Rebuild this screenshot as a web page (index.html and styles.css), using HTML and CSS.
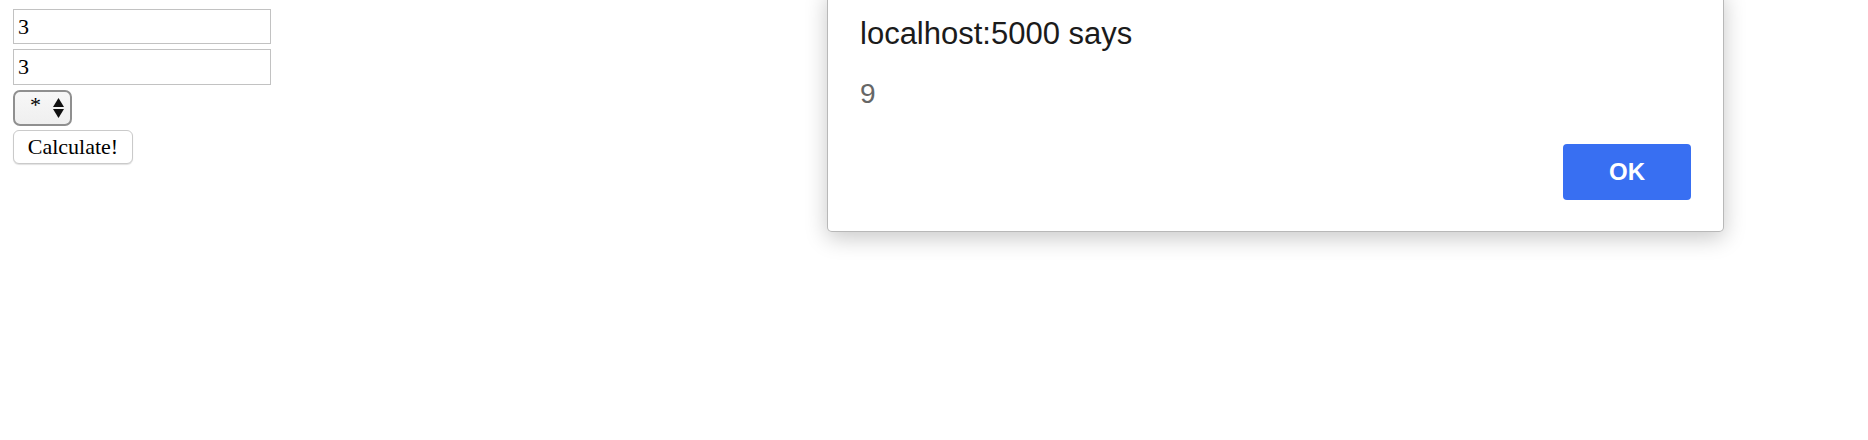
FILE: index.html
```html
<!DOCTYPE html>
<html>
<head>
<meta charset="utf-8">
<link rel="stylesheet" href="styles.css">
</head>
<body>
<form class="calc">
  <input class="num num-a" type="text" value="3">
  <input class="num num-b" type="text" value="3">
  <div class="select-wrap">
    <select class="op">
      <option>*</option>
    </select>
    <svg class="select-arrows" width="11" height="20" viewBox="0 0 11 20">
      <polygon points="5.5,0 11,9 0,9" fill="#111"/>
      <polygon points="0,11 11,11 5.5,20" fill="#111"/>
    </svg>
  </div>
  <button class="calc-btn" type="button">Calculate!</button>
</form>

<div class="alert">
  <div class="alert-title">localhost:5000 says</div>
  <div class="alert-msg">9</div>
  <div class="alert-actions">
    <button class="alert-ok" type="button">OK</button>
  </div>
</div>
</body>
</html>
```
FILE: styles.css
```css
html, body {
  margin: 0;
  padding: 0;
  background: #ffffff;
}

body {
  width: 1868px;
  height: 440px;
  position: relative;
  overflow: hidden;
  font-family: "Liberation Serif", "Times New Roman", serif;
}

.calc {
  display: flex;
  flex-direction: column;
  align-items: flex-start;
  padding: 9px 0 0 13px;
}

.num {
  box-sizing: border-box;
  width: 258px;
  height: 35px;
  margin: 0;
  padding: 0 4px;
  border: 1px solid #c2c2c2;
  border-radius: 0;
  font-family: "Liberation Serif", "Times New Roman", serif;
  font-size: 22px;
  color: #000;
  background: #fff;
  outline: none;
}

.num-b {
  margin-top: 5px;
  height: 36px;
}

.select-wrap {
  position: relative;
  margin-top: 5px;
  width: 59px;
  height: 36px;
}

.op {
  -webkit-appearance: none;
  appearance: none;
  box-sizing: border-box;
  width: 59px;
  height: 36px;
  margin: 0;
  padding: 0 0 8px 15px;
  border: 2px solid #8f8f8f;
  border-radius: 7px;
  background: linear-gradient(#f7f7f7, #efefef);
  font-family: "Liberation Serif", "Times New Roman", serif;
  font-size: 22px;
  color: #000;
  outline: none;
}

.select-arrows {
  position: absolute;
  left: 40px;
  top: 8px;
  pointer-events: none;
}

.calc-btn {
  box-sizing: border-box;
  margin-top: 4px;
  width: 120px;
  height: 34px;
  padding: 0;
  border: 1px solid #cacaca;
  border-radius: 6px;
  background: #ffffff;
  box-shadow: 0 1px 1px rgba(0, 0, 0, 0.12);
  font-family: "Liberation Serif", "Times New Roman", serif;
  font-size: 22px;
  color: #000;
}

.alert {
  position: absolute;
  left: 827px;
  top: -10px;
  width: 897px;
  height: 242px;
  box-sizing: border-box;
  padding: 26px 32px 31px 32px;
  background: #ffffff;
  border: 1px solid rgba(0, 0, 0, 0.28);
  border-top: none;
  border-radius: 0 0 5px 5px;
  box-shadow: 0 6px 22px rgba(0, 0, 0, 0.22);
  display: flex;
  flex-direction: column;
  font-family: "Liberation Sans", Arial, sans-serif;
}

.alert-title {
  font-size: 31px;
  line-height: 36px;
  color: #1b1b1b;
}

.alert-msg {
  margin-top: 26px;
  font-size: 28px;
  line-height: 32px;
  color: #666666;
}

.alert-actions {
  margin-top: auto;
  display: flex;
  justify-content: flex-end;
}

.alert-ok {
  width: 128px;
  height: 56px;
  margin: 0;
  padding: 0;
  border: none;
  border-radius: 4px;
  background: #386ff2;
  color: #ffffff;
  font-family: "Liberation Sans", Arial, sans-serif;
  font-weight: bold;
  font-size: 24px;
}
```
